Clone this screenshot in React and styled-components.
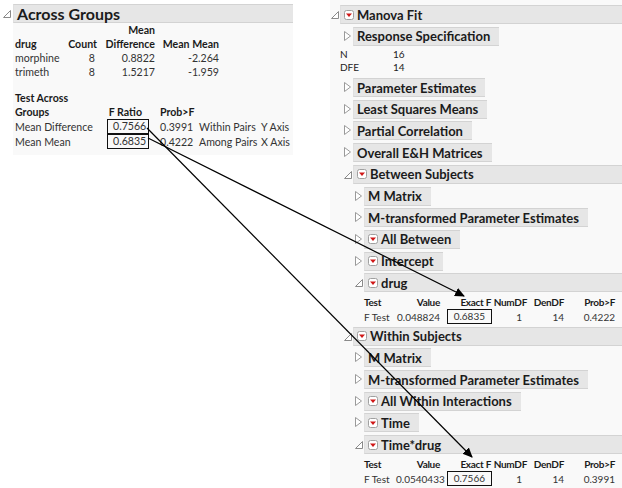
import styled, { createGlobalStyle } from "styled-components";

const GlobalStyle = createGlobalStyle`
html, body {
  margin: 0;
  padding: 0;
  background: white;
}
body {
  font-family: Lato, "Open Sans", sans-serif;
  color: #222;
}
`;

const OpenTri = () => (
  <svg width="8" height="8" viewBox="0 0 8 8">
    <path d="M7.5 0.5 L7.5 7.5 L0.5 7.5 Z" fill="white" stroke="#8a8a8a" strokeWidth="1" />
  </svg>
);

const ClosedTri = () => (
  <svg width="7" height="10" viewBox="0 0 7 10">
    <path d="M0.5 0.5 L6.5 5 L0.5 9.5 Z" fill="white" stroke="#9a9a9a" strokeWidth="1" />
  </svg>
);

const RedMenu = () => (
  <svg width="10" height="10" viewBox="0 0 10 10">
    <rect x="0.5" y="0.5" width="9" height="9" rx="2" fill="white" stroke="#a0a0a0" />
    <path d="M2 3.5 L8 3.5 L5 7 Z" fill="#d01818" />
  </svg>
);

const Page = styled.div`
  position: relative;
  width: 622px;
  height: 488px;
  display: flex;
  overflow: hidden;
`;

const LeftCol = styled.div`
  width: 291px;
  padding-top: 4px;
  margin-left: 2px;
`;

const RightCol = styled.div`
  flex: 1;
  margin-left: 37px;
  padding-top: 5px;
  background: #f9f9f9;
  height: 100%;
`;

const Row = styled.div`
  display: flex;
  align-items: flex-start;
`;

const Toggle = styled.div`
  width: ${(p) => p.$w || 9}px;
  flex: none;
  display: flex;
  padding-top: ${(p) => p.$top}px;
  padding-left: 1px;
`;

const Body = styled.div`
  flex: 1;
  min-width: 0;
  display: flex;
  flex-direction: column;
  gap: 2.7px;
`;

const Header = styled.div`
  display: flex;
  align-items: center;
  gap: 3px;
  height: 17px;
  padding: 0 9px 0 3px;
  background: #e6e6e6;
  border-top: 1px solid #d3d3d3;
  border-bottom: 1px solid #d3d3d3;
  border-left: 1px solid #e0e0e0;
  font-weight: 700;
  font-size: ${(p) => p.$size || 13}px;
  color: #1b1b1b;
  align-self: ${(p) => (p.$open ? "stretch" : "flex-start")};
  white-space: nowrap;
`;

const Children = styled.div`
  display: flex;
  flex-direction: column;
  gap: 2.7px;
  padding-left: ${(p) => p.$indent || 3}px;
`;

const LeftPanel = styled.div`
  background: #f9f9f9;
  padding-bottom: 6px;
`;

const Grid = styled.div`
  display: grid;
  grid-template-columns: ${(p) => p.$cols};
  font-size: ${(p) => p.$fs || 10.6}px;
  line-height: ${(p) => p.$lh || 14}px;
  color: #333;
  margin-left: ${(p) => p.$ml || 0}px;
  margin-top: ${(p) => p.$mt || 0}px;
  white-space: nowrap;
`;

const Cell = styled.div`
  text-align: ${(p) => (p.$left ? "left" : "right")};
  font-weight: ${(p) => (p.$head ? 700 : 400)};
  color: ${(p) => (p.$head ? "#1b1b1b" : "#333")};
  letter-spacing: ${(p) => (p.$tight ? "-0.3px" : "normal")};
  align-self: end;
  padding-right: ${(p) => p.$pr || 0}px;
  padding-left: ${(p) => p.$pl || 0}px;
`;

const Boxed = styled.span`
  display: inline-block;
  border: 1px solid #111;
  padding: 0 ${(p) => p.$px || 2}px 0 ${(p) => p.$px || 5}px;
  line-height: 13px;
`;

const StatList = styled.div`
  display: grid;
  grid-template-columns: 53px auto;
  font-size: 10px;
  color: #222;
  line-height: 13px;
  padding-bottom: 1px;
`;

const Arrows = styled.svg`
  position: absolute;
  left: 0;
  top: 0;
  pointer-events: none;
`;

function Node({ title, open, menu, children }) {
  return (
    <Row>
      <Toggle $top={open ? 6 : 4}>{open ? <OpenTri /> : <ClosedTri />}</Toggle>
      <Body>
        <Header $open={open}>
          {menu && <RedMenu />}
          <span>{title}</span>
        </Header>
        {children}
      </Body>
    </Row>
  );
}

function TestTable({ value, exact, prob }) {
  return (
    <Grid $cols="32px 44px 52px 35px 37px 51px" $mt={1} $fs={10} $lh={13}>
      <Cell $head $tight $left>Test</Cell>
      <Cell $head $tight>Value</Cell>
      <Cell $head $tight $pr={1}>Exact F</Cell>
      <Cell $head $tight>NumDF</Cell>
      <Cell $head $tight>DenDF</Cell>
      <Cell $head $tight>Prob&gt;F</Cell>
      <Cell $left>F Test</Cell>
      <Cell>{value}</Cell>
      <Cell>
        <Boxed $px={6}>{exact}</Boxed>
      </Cell>
      <Cell $pr={5}>1</Cell>
      <Cell>14</Cell>
      <Cell>{prob}</Cell>
    </Grid>
  );
}

export default function App() {
  return (
    <>
      <GlobalStyle />
      <Page>
        <LeftCol>
          <Row>
            <Toggle $w={10} $top={6}>
              <OpenTri />
            </Toggle>
            <Body>
              <LeftPanel>
                <Header $open $size={16}>
                  <span>Across Groups</span>
                </Header>
                <Grid $cols="52px 30px 58px 64px" $ml={2}>
                  <Cell $head $left>drug</Cell>
                  <Cell $head>Count</Cell>
                  <Cell $head>
                    Mean
                    <br />
                    Difference
                  </Cell>
                  <Cell $head>Mean Mean</Cell>
                  <Cell $left>morphine</Cell>
                  <Cell $pr={2}>8</Cell>
                  <Cell>0.8822</Cell>
                  <Cell>-2.264</Cell>
                  <Cell $left>trimeth</Cell>
                  <Cell $pr={2}>8</Cell>
                  <Cell>1.5217</Cell>
                  <Cell>-1.959</Cell>
                </Grid>
                <Grid $cols="92px 40px 52px 62px auto" $ml={2} $mt={12}>
                  <Cell $head $left>
                    Test Across
                    <br />
                    Groups
                  </Cell>
                  <Cell $head $pr={5}>F Ratio</Cell>
                  <Cell $head $left $pl={13}>Prob&gt;F</Cell>
                  <Cell />
                  <Cell />
                  <Cell $left>Mean Difference</Cell>
                  <Cell><Boxed>0.7566</Boxed></Cell>
                  <Cell $left $pl={13}>0.3991</Cell>
                  <Cell $left>Within Pairs</Cell>
                  <Cell $left>Y Axis</Cell>
                  <Cell $left>Mean Mean</Cell>
                  <Cell><Boxed>0.6835</Boxed></Cell>
                  <Cell $left $pl={13}>0.4222</Cell>
                  <Cell $left>Among Pairs</Cell>
                  <Cell $left>X Axis</Cell>
                </Grid>
              </LeftPanel>
            </Body>
          </Row>
        </LeftCol>

        <RightCol>
          <Row>
            <Toggle $top={6}>
              <OpenTri />
            </Toggle>
            <Body>
              <Header $open>
                <RedMenu />
                <span>Manova Fit</span>
              </Header>
              <Children $indent={3}>
                <Node title="Response Specification" />
              </Children>
              <StatList>
                <span>N</span>
                <span>16</span>
                <span>DFE</span>
                <span>14</span>
              </StatList>
              <Children $indent={3}>
                <Node title="Parameter Estimates" />
                <Node title="Least Squares Means" />
                <Node title="Partial Correlation" />
                <Node title="Overall E&H Matrices" />
                <Node title="Between Subjects" open menu>
                  <Children $indent={1}>
                    <Node title="M Matrix" />
                    <Node title="M-transformed Parameter Estimates" />
                    <Node title="All Between" menu />
                    <Node title="Intercept" menu />
                    <Node title="drug" open menu>
                      <TestTable value="0.048824" exact="0.6835" prob="0.4222" />
                    </Node>
                  </Children>
                </Node>
                <Node title="Within Subjects" open menu>
                  <Children $indent={1}>
                    <Node title="M Matrix" />
                    <Node title="M-transformed Parameter Estimates" />
                    <Node title="All Within Interactions" menu />
                    <Node title="Time" menu />
                    <Node title="Time*drug" open menu>
                      <TestTable value="0.0540433" exact="0.7566" prob="0.3991" />
                    </Node>
                  </Children>
                </Node>
              </Children>
            </Body>
          </Row>
        </RightCol>

        <Arrows width="622" height="488" viewBox="0 0 622 488">
          <defs>
            <marker id="head" markerWidth="10" markerHeight="10" refX="9" refY="5" orient="auto" markerUnits="userSpaceOnUse">
              <path d="M0 0.5 L10 5 L0 9.5 Z" fill="#000" />
            </marker>
          </defs>
          <line x1="147" y1="128" x2="472" y2="457" stroke="#000" strokeWidth="1.2" markerEnd="url(#head)" />
          <line x1="148" y1="138" x2="464" y2="296" stroke="#000" strokeWidth="1.2" markerEnd="url(#head)" />
        </Arrows>
      </Page>
    </>
  );
}
